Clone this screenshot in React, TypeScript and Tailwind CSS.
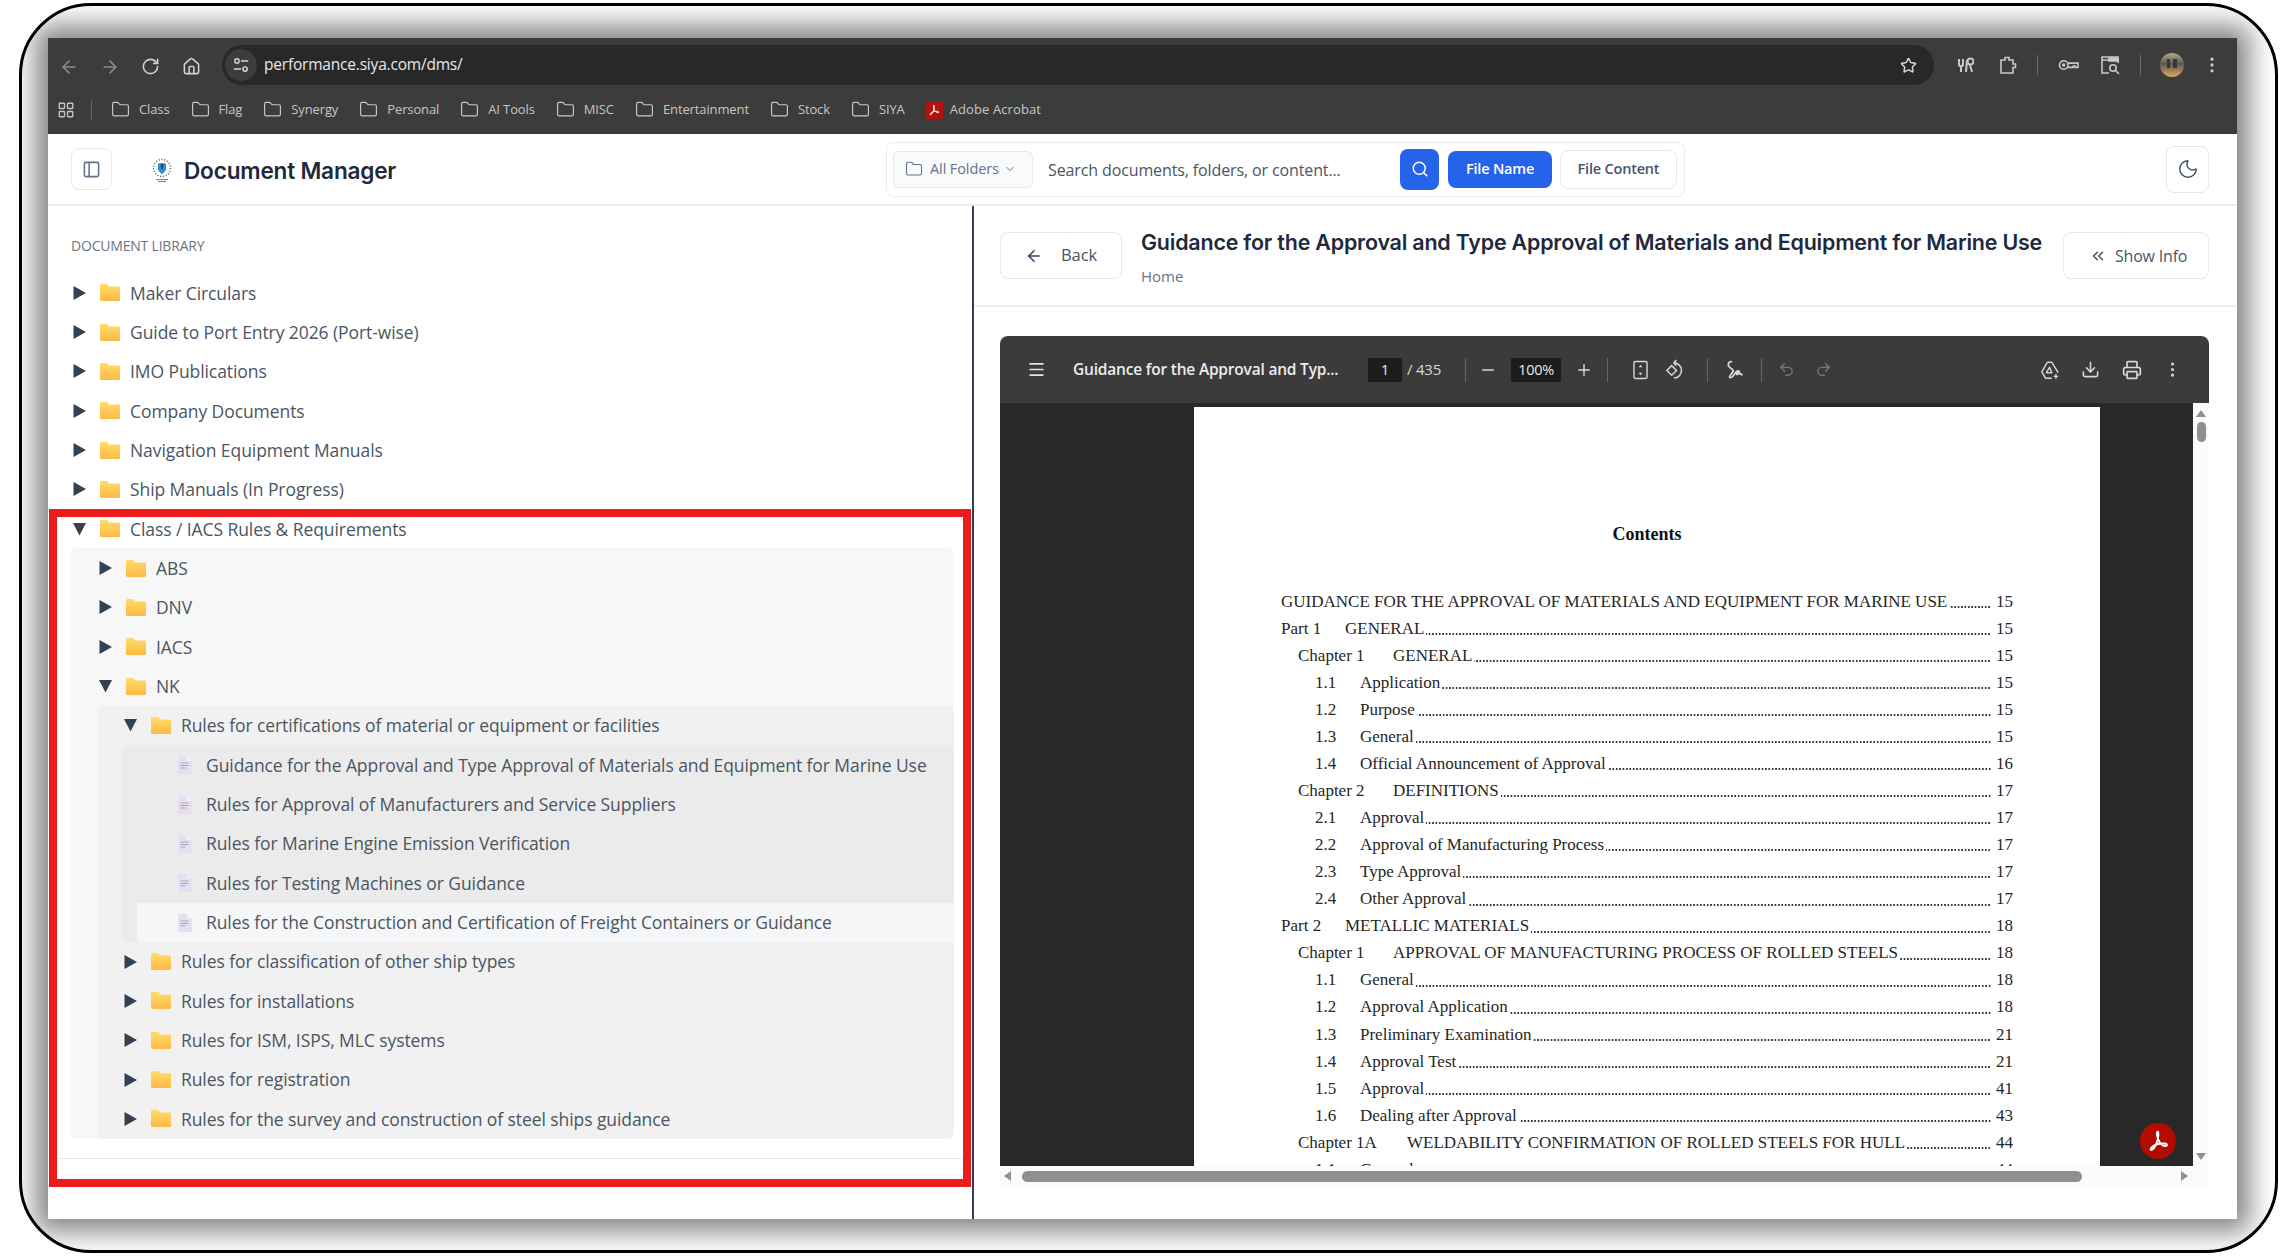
import {
  ArrowLeft,
  ArrowRight,
  ChevronDown,
  ChevronsLeft,
  Download,
  Folder,
  House,
  LayoutGrid,
  Menu,
  Minus,
  Moon,
  MoreVertical,
  PanelLeft,
  Plus,
  Printer,
  Redo2,
  RotateCw,
  Search,
  Star,
  Undo2,
} from "lucide-react";

const bookmarks = ["Class", "Flag", "Synergy", "Personal", "AI Tools", "MISC", "Entertainment", "Stock", "SIYA"];

const toc = [
  { kind: "top", label: "", text: "GUIDANCE FOR THE APPROVAL OF MATERIALS AND EQUIPMENT FOR MARINE USE", page: "15" },
  { kind: "part", label: "Part 1", text: "GENERAL", page: "15" },
  { kind: "chapter", label: "Chapter 1", text: "GENERAL", page: "15" },
  { kind: "section", label: "1.1", text: "Application", page: "15" },
  { kind: "section", label: "1.2", text: "Purpose", page: "15" },
  { kind: "section", label: "1.3", text: "General", page: "15" },
  { kind: "section", label: "1.4", text: "Official Announcement of Approval", page: "16" },
  { kind: "chapter", label: "Chapter 2", text: "DEFINITIONS", page: "17" },
  { kind: "section", label: "2.1", text: "Approval", page: "17" },
  { kind: "section", label: "2.2", text: "Approval of Manufacturing Process", page: "17" },
  { kind: "section", label: "2.3", text: "Type Approval", page: "17" },
  { kind: "section", label: "2.4", text: "Other Approval", page: "17" },
  { kind: "part", label: "Part 2", text: "METALLIC MATERIALS", page: "18" },
  { kind: "chapter", label: "Chapter 1", text: "APPROVAL OF MANUFACTURING PROCESS OF ROLLED STEELS", page: "18" },
  { kind: "section", label: "1.1", text: "General", page: "18" },
  { kind: "section", label: "1.2", text: "Approval Application", page: "18" },
  { kind: "section", label: "1.3", text: "Preliminary Examination", page: "21" },
  { kind: "section", label: "1.4", text: "Approval Test", page: "21" },
  { kind: "section", label: "1.5", text: "Approval", page: "41" },
  { kind: "section", label: "1.6", text: "Dealing after Approval", page: "43" },
  { kind: "wide", label: "Chapter 1A", text: "WELDABILITY CONFIRMATION OF ROLLED STEELS FOR HULL", page: "44" },
  { kind: "section", label: "1.1", text: "General", page: "44" },
];

const tocIndent: Record<string, string> = {
  top: "pl-0",
  part: "pl-0",
  chapter: "pl-[17px]",
  wide: "pl-[17px]",
  section: "pl-[34px]",
};

const tocLabel: Record<string, string> = {
  top: "w-0",
  part: "w-[64px]",
  chapter: "w-[95px]",
  wide: "w-[109px]",
  section: "w-[45px]",
};

function Caret({ open }: { open?: boolean }) {
  return (
    <svg viewBox="0 0 13 14" className="ml-[2px] h-[14px] w-[13px] shrink-0 fill-[#334155]">
      {open ? <path d="M0 1h13L6.5 13.5z" /> : <path d="M0.5 0 13 7 0.5 14z" />}
    </svg>
  );
}

function TreeFolder() {
  return (
    <svg viewBox="0 0 20 17" className="ml-[14px] h-[17px] w-[20px] shrink-0">
      <defs>
        <linearGradient id="fold" x1="0" y1="0" x2="0" y2="1">
          <stop offset="0" stopColor="#ffdc6a" />
          <stop offset="1" stopColor="#fdb945" />
        </linearGradient>
      </defs>
      <path d="M0 1.2C0 .5.5 0 1.2 0h5.6c.5 0 .9.2 1.1.6L9 2.4h9.8c.7 0 1.2.5 1.2 1.2v12.2c0 .7-.5 1.2-1.2 1.2H1.2C.5 17 0 16.500 0 15.800z" fill="url(#fold)" />
    </svg>
  );
}

function TreeFile() {
  return (
    <svg viewBox="0 0 14 19" className="h-[19px] w-[14px] shrink-0">
      <path d="M0 1h9l5 5v13H0z" fill="#e6dff3" />
      <path d="M9 1l5 5H9z" fill="#f3f0f8" />
      <path d="M2.500 8h8M2.500 10.500h8M2.500 13h5" stroke="#a9a7b4" strokeWidth="1.100" />
    </svg>
  );
}

function FolderRow({ name, open }: { name: string; open?: boolean }) {
  return (
    <div className="flex h-[39.35px] items-center">
      <Caret open={open} />
      <TreeFolder />
      <span className="ml-[10px] whitespace-nowrap text-[17.500px] tracking-[-0.08px] text-[#4b5563]">{name}</span>
    </div>
  );
}

function FileRow({ name, active }: { name: string; active?: boolean }) {
  return (
    <div className={`ml-[15px] flex h-[39.35px] items-center pl-[41px] ${active ? "bg-[#f5f6f7]" : ""}`}>
      <TreeFile />
      <span className="ml-[14px] whitespace-nowrap text-[17.500px] tracking-[-0.08px] text-[#4b5563]">{name}</span>
    </div>
  );
}

function Tree() {
  return (
    <div>
      <FolderRow name="Maker Circulars" />
      <FolderRow name="Guide to Port Entry 2026 (Port-wise)" />
      <FolderRow name="IMO Publications" />
      <FolderRow name="Company Documents" />
      <FolderRow name="Navigation Equipment Manuals" />
      <FolderRow name="Ship Manuals (In Progress)" />
      <FolderRow name="Class / IACS Rules & Requirements" open />
      <div className="rounded-md bg-[#f7f7f7] pl-[26px]">
        <FolderRow name="ABS" />
        <FolderRow name="DNV" />
        <FolderRow name="IACS" />
        <FolderRow name="NK" open />
        <div className="rounded-md bg-[#f1f1f1] pl-[25px]">
          <FolderRow name="Rules for certifications of material or equipment or facilities" open />
          <div className="rounded-md bg-[#ebebeb]">
            <FileRow name="Guidance for the Approval and Type Approval of Materials and Equipment for Marine Use" />
            <FileRow name="Rules for Approval of Manufacturers and Service Suppliers" />
            <FileRow name="Rules for Marine Engine Emission Verification" />
            <FileRow name="Rules for Testing Machines or Guidance" />
            <FileRow name="Rules for the Construction and Certification of Freight Containers or Guidance" active />
          </div>
          <FolderRow name="Rules for classification of other ship types" />
          <FolderRow name="Rules for installations" />
          <FolderRow name="Rules for ISM, ISPS, MLC systems" />
          <FolderRow name="Rules for registration" />
          <FolderRow name="Rules for the survey and construction of steel ships guidance" />
        </div>
      </div>
    </div>
  );
}

function AcrobatMark({ className }: { className: string }) {
  return (
    <svg viewBox="0 0 24 24" fill="none" stroke="currentColor" strokeWidth="1.700" strokeLinejoin="round" className={className}>
      <path d="M11.800 3.500c-1.300 0-1.100 3.300.5 7.200 1.500 3.600 4.100 6 6.500 5.900 2.300-.1 1.900-2.200-.5-2.300-4.200-.2-8.600.7-11.300 2.700-2.300 1.700-2.200 3.600-.9 3.200 1.600-.5 4-4.300 5.200-8.100.9-2.900 1.700-8.600.5-8.600z" />
    </svg>
  );
}

function Logo() {
  return (
    <svg viewBox="0 0 20 26" className="h-[26px] w-[20px] shrink-0">
      <circle cx="10" cy="12" r="8.500" fill="none" stroke="#55708f" strokeWidth="1.400" strokeDasharray="1.200 1.600" />
      <path d="M6 7.500h8v6.500l-4 4.500-4-4.500z" fill="#2e8fc9" />
      <path d="M8.500 7.500h3l-1 6h-1z" fill="#0f4e80" />
      <path d="M4 23.500h12M6 25.500h8" stroke="#6d7ea8" strokeWidth="1.200" />
    </svg>
  );
}

function ChromeBar() {
  return (
    <div className="h-[96px] shrink-0 bg-[#3c3c3c]">
      <div className="flex h-[54px] items-end">
        <div className="flex h-[49px] w-[174px] shrink-0 items-center pb-[2px] pl-[11px]">
          <ArrowLeft className="h-[20px] w-[20px] text-[#8a8a8a]" />
          <ArrowRight className="ml-[21px] h-[20px] w-[20px] text-[#8a8a8a]" />
          <RotateCw className="ml-[21px] h-[19px] w-[19px] text-[#d0d0d0]" />
          <House className="ml-[22px] h-[19px] w-[19px] text-[#d0d0d0]" />
        </div>
        <div className="mb-[7px] flex h-[40px] w-[1712px] shrink-0 items-center rounded-full bg-[#282828] pl-[3px] pr-[17px]">
          <div className="flex h-[32px] w-[32px] items-center justify-center rounded-full bg-[#3c3c3c]">
            <svg viewBox="0 0 20 20" fill="none" stroke="#d8d8d8" strokeWidth="1.600" className="h-[18px] w-[18px]">
              <circle cx="5.500" cy="5.500" r="2.400" />
              <path d="M10 5.500h8M2 14.500h8" />
              <circle cx="14.500" cy="14.500" r="2.400" />
            </svg>
          </div>
          <span className="ml-[7px] text-[15.500px] tracking-[-0.2px] text-[#e8e8e8]">performance.siya.com/dms/</span>
          <Star className="ml-auto h-[17px] w-[17px] text-[#dcdcdc]" strokeWidth={2} />
        </div>
        <div className="mb-[7px] flex h-[40px] flex-1 items-center text-[#c8c8c8]">
          <svg viewBox="0 0 18 18" className="ml-[22px] h-[18px] w-[18px]" fill="none" stroke="currentColor" strokeWidth="2">
            <path d="M3 3v6l2 2v5M7 3v6l-2 2M11 4l-1 12M14.500 2.500a3 3 0 1 1 0 6 3 3 0 0 1 0-6zM14 9l2 7" />
          </svg>
          <svg viewBox="0 0 20 20" className="ml-[24px] h-[20px] w-[20px]" fill="none" stroke="currentColor" strokeWidth="1.600">
            <path d="M3 5h4V2.500h4V5h4v4h2.500v3.500H15V18H3z" />
          </svg>
          <div className="ml-[19px] h-[20px] w-px bg-[#6a6a6a]" />
          <svg viewBox="0 0 22 14" className="ml-[20px] h-[14px] w-[21px]" fill="none" stroke="currentColor" strokeWidth="1.700">
            <circle cx="6" cy="7" r="4.500" />
            <circle cx="6" cy="7" r="1" />
            <path d="M10.500 5H21v4.500h-3V8h-2v1.500h-5.500" />
          </svg>
          <svg viewBox="0 0 20 20" className="ml-[21px] h-[20px] w-[20px]" fill="none" stroke="currentColor" strokeWidth="1.600">
            <path d="M9 18H2V2h16v6M2 5h16" />
            <path d="M9 3h9v3H9z" fill="currentColor" />
            <circle cx="13" cy="13" r="3.200" />
            <path d="M15.500 15.500 19 19" />
          </svg>
          <div className="ml-[20px] h-[20px] w-px bg-[#6a6a6a]" />
          <svg viewBox="0 0 24 24" className="ml-[19px] h-[24px] w-[24px]">
            <defs>
              <linearGradient id="avatar" x1="0" y1="0" x2="0" y2="1">
                <stop offset="0" stopColor="#b9a98a" />
                <stop offset="0.450" stopColor="#5c5a55" />
                <stop offset="1" stopColor="#e0a45c" />
              </linearGradient>
            </defs>
            <circle cx="12" cy="12" r="12" fill="url(#avatar)" />
            <path d="M7 6h3v9H7zM13 6h4v9h-4z" fill="#33373d" />
          </svg>
          <MoreVertical className="ml-[18px] h-[20px] w-[20px]" />
        </div>
      </div>
      <div className="flex h-[35px] items-center pl-[9px] text-[13px] tracking-[-0.12px] text-[#c6c6c6]">
        <LayoutGrid className="h-[18px] w-[18px]" strokeWidth={1.800} />
        <div className="ml-[16px] h-[20px] w-px bg-[#666666]" />
        <div className="ml-[19px] flex items-center gap-[21px]">
          {bookmarks.map((name) => (
            <div key={name} className="flex items-center gap-[9px]">
              <Folder className="h-[19px] w-[19px]" strokeWidth={1.500} />
              <span>{name}</span>
            </div>
          ))}
          <div className="flex items-center gap-[7px]">
            <div className="flex h-[18px] w-[17px] items-center justify-center rounded-[2px] bg-[#b3120f] text-white">
              <AcrobatMark className="h-[14px] w-[14px]" />
            </div>
            <span className="tracking-[0.1px]">Adobe Acrobat</span>
          </div>
        </div>
      </div>
    </div>
  );
}

function AppHeader() {
  return (
    <div className="flex h-[72px] shrink-0 items-center border-b-2 border-[#eceef1]">
      <div className="ml-[23px] flex h-[42px] w-[41px] shrink-0 items-center justify-center rounded-lg border border-[#e5e7eb]">
        <PanelLeft className="h-[19px] w-[19px] text-[#64748b]" />
      </div>
      <div className="ml-[40px] flex w-[734px] shrink-0 items-center">
        <Logo />
        <span className="ml-[12px] pt-[3px] font-['Inter',sans-serif] text-[22.600px] font-semibold tracking-[-0.2px] text-[#1e293b]">Document Manager</span>
      </div>
      <div className="flex h-[55px] w-[799px] shrink-0 items-center rounded-lg border border-[#e9ebee] pl-[6px]">
        <div className="flex h-[37px] w-[140px] items-center rounded-md border border-[#e5e7eb] bg-[#f9fafb] pl-[11px] text-[14.500px] tracking-[-0.1px] text-[#64748b]">
          <Folder className="h-[18px] w-[18px]" strokeWidth={1.500} />
          <span className="ml-[7px]">All Folders</span>
          <ChevronDown className="ml-[5px] h-[12px] w-[12px]" />
        </div>
        <span className="ml-[15px] w-[352px] pt-[2px] text-[16px] tracking-[-0.12px] text-[#4b5563]">Search documents, folders, or content...</span>
        <div className="flex h-[41px] w-[39px] items-center justify-center rounded-lg bg-[#2563eb]">
          <Search className="h-[18px] w-[18px] text-white" />
        </div>
        <div className="ml-[9px] flex h-[37px] w-[104px] items-center justify-center rounded-lg bg-[#2563eb] text-[14.500px] font-semibold tracking-[-0.2px] text-white">File Name</div>
        <div className="ml-[8px] flex h-[39px] w-[117px] items-center justify-center rounded-lg border border-[#e5e7eb] text-[14.500px] font-semibold tracking-[-0.2px] text-[#475569]">File Content</div>
      </div>
      <div className="ml-auto mr-[28px] flex h-[47px] w-[43px] items-center justify-center rounded-lg border border-[#e5e7eb]">
        <Moon className="h-[22px] w-[22px] text-[#475569]" strokeWidth={1.600} />
      </div>
    </div>
  );
}

function PdfToolbar() {
  return (
    <div className="flex h-[67px] shrink-0 items-center bg-[#3b3b3b] text-[#d6d6d6]">
      <Menu className="ml-[27px] h-[19px] w-[19px] text-[#e4e4e4]" strokeWidth={2.200} />
      <span className="ml-[27px] w-[295px] whitespace-nowrap text-[15.500px] font-semibold tracking-[-0.2px] text-[#ececec]">Guidance for the Approval and Typ...</span>
      <div className="flex h-[24px] w-[34px] items-center justify-center bg-[#1c1c1c] text-[15px] text-[#e8e8e8]">1</div>
      <span className="ml-[5px] text-[15px] tracking-[-0.2px]">/ 435</span>
      <div className="ml-[24px] h-[24px] w-px bg-[#666666]" />
      <Minus className="ml-[13px] h-[18px] w-[18px]" />
      <div className="ml-[14px] flex h-[24px] w-[50px] items-center justify-center bg-[#1c1c1c] text-[14.500px] tracking-[-0.3px] text-[#e8e8e8]">100%</div>
      <Plus className="ml-[14px] h-[18px] w-[18px]" />
      <div className="ml-[14px] h-[24px] w-px bg-[#666666]" />
      <svg viewBox="0 0 16 20" className="ml-[25px] h-[20px] w-[15px]" fill="none" stroke="currentColor" strokeWidth="1.500">
        <rect x="1" y="1" width="14" height="18" rx="1.500" />
        <path d="M8 4.500l-2 2.500h4zM8 15.500l-2-2.500h4z" fill="currentColor" stroke="none" />
      </svg>
      <svg viewBox="0 0 22 22" className="ml-[17px] h-[21px] w-[21px]" fill="none" stroke="currentColor" strokeWidth="1.600">
        <path d="M2 12l5-5 5 5-5 5z" />
        <path d="M9 4a8 8 0 1 1 .5 16M9 4l3-3M9 4l3 3" />
      </svg>
      <div className="ml-[21px] h-[24px] w-px bg-[#666666]" />
      <svg viewBox="0 0 20 20" className="ml-[16px] h-[21px] w-[21px]" fill="none" stroke="currentColor" strokeWidth="1.700" strokeLinecap="round">
        <path d="M7 2.500C4 2.500 3 6 5.500 8c2.500 2 4.500 2.500 2.500 5-1.500 2-3.500 3.500-2.500 4.500 1.500 1 4-2 5.500-4.500 1-1.700 3.500-2.500 3.500-.5 0 2.500-3 3-2.500 1 .3-1 3-.5 5 1.500" />
      </svg>
      <div className="ml-[16px] h-[24px] w-px bg-[#666666]" />
      <Undo2 className="ml-[16px] h-[17px] w-[17px] text-[#777777]" />
      <Redo2 className="ml-[20px] h-[17px] w-[17px] text-[#777777]" />
      <svg viewBox="0 0 22 22" className="ml-[208px] h-[20px] w-[20px]" fill="none" stroke="currentColor" strokeWidth="1.600" strokeLinejoin="round">
        <path d="M8 2.500h5L20 14M8 2.500 2 13l4 7h7M13 2.500" />
        <path d="M10.500 8 7 14h6z" />
        <path d="M17.500 15.500v5M15 18h5" />
      </svg>
      <Download className="ml-[21px] h-[19px] w-[19px]" />
      <Printer className="ml-[22px] h-[20px] w-[20px]" />
      <MoreVertical className="ml-[21px] h-[19px] w-[19px]" />
    </div>
  );
}

function PdfPage() {
  return (
    <div className="h-[759px] w-[906px] shrink-0 overflow-hidden bg-white pl-[87px] pr-[87px] pt-[116px] font-['Liberation_Serif',serif] text-[#262626]">
      <div className="h-[22px] text-center text-[18px] font-bold leading-[22px] text-[#111111]">Contents</div>
      <div className="mt-[43px]">
        {toc.map((row, i) => (
          <div key={i} className={`flex h-[27.05px] items-center whitespace-nowrap text-[17px] ${tocIndent[row.kind]}`}>
            {row.label ? <span className={`shrink-0 ${tocLabel[row.kind]}`}>{row.label}</span> : null}
            <span className="shrink-0">{row.text}</span>
            <div className="ml-[2px] mt-[11px] h-[4px] min-w-0 flex-1 bg-[radial-gradient(circle,#3a3a3a_0.8px,transparent_1.1px)] bg-[length:3.4px_4px] bg-right bg-repeat-x" />
            <span className="ml-[5px] shrink-0">{row.page}</span>
          </div>
        ))}
      </div>
    </div>
  );
}

function PdfViewer() {
  return (
    <div className="ml-[26px] mt-[29px] w-[1209px] overflow-hidden rounded-t-lg">
      <PdfToolbar />
      <div className="relative flex h-[763px]">
        <div className="flex flex-1 bg-[#282828] pl-[194px] pt-[4px]">
          <PdfPage />
        </div>
        <div className="flex w-[16px] shrink-0 flex-col items-center bg-[#fbfbfb] pt-[7px]">
          <div className="h-0 w-0 border-x-[5px] border-b-[7px] border-x-transparent border-b-[#8f8f8f]" />
          <div className="mt-[5px] h-[20px] w-[9px] rounded-full bg-[#8f8f8f]" />
          <div className="mt-auto mb-[6px] h-0 w-0 border-x-[5px] border-t-[7px] border-x-transparent border-t-[#8f8f8f]" />
        </div>
        <div className="absolute right-[33px] bottom-[7px] flex h-[36px] w-[36px] items-center justify-center rounded-full bg-[#b30b00] text-white">
          <AcrobatMark className="h-[26px] w-[26px]" />
        </div>
      </div>
      <div className="flex h-[20px] items-center bg-[#fbfbfb] pl-[4px]">
        <div className="h-0 w-0 border-y-[5px] border-r-[7px] border-y-transparent border-r-[#8f8f8f]" />
        <div className="ml-[11px] h-[11px] w-[1060px] rounded-full bg-[#8f8f8f]" />
        <div className="ml-[99px] h-0 w-0 border-y-[5px] border-l-[7px] border-y-transparent border-l-[#8f8f8f]" />
      </div>
    </div>
  );
}

function DocPanel() {
  return (
    <div className="min-w-0 flex-1">
      <div className="flex h-[101px] border-b-2 border-[#eceef1] pl-[26px] pt-[26px]">
        <div className="flex h-[47px] w-[122px] shrink-0 items-center rounded-lg border border-[#e5e7eb] pl-[24px] text-[16.500px] tracking-[-0.1px] text-[#475569]">
          <ArrowLeft className="h-[18px] w-[18px] text-[#334155]" />
          <span className="ml-[18px]">Back</span>
        </div>
        <div className="ml-[19px] w-[922px] shrink-0">
          <div className="-mt-[5px] whitespace-nowrap font-['Inter',sans-serif] text-[21.450px] font-semibold leading-[30px] tracking-[-0.2px] text-[#1e293b]">
            Guidance for the Approval and Type Approval of Materials and Equipment for Marine Use
          </div>
          <div className="mt-[8px] text-[15px] text-[#64748b]">Home</div>
        </div>
        <div className="flex h-[47px] w-[146px] shrink-0 items-center rounded-lg border border-[#e5e7eb] pl-[25px] text-[16px] tracking-[-0.2px] text-[#475569]">
          <ChevronsLeft className="h-[18px] w-[18px]" />
          <span className="ml-[8px]">Show Info</span>
        </div>
      </div>
      <PdfViewer />
    </div>
  );
}

export default function App() {
  return (
    <div className="h-[1260px] w-[2287px] overflow-hidden bg-white pl-[19px] pt-[3px] font-['Open_Sans',sans-serif]">
      <div className="h-[1250px] w-[2259px] overflow-hidden rounded-[72px] border-[3px] border-black bg-white pl-[26px] pt-[32px]">
        <div className="flex h-[1181px] w-[2189px] flex-col bg-white shadow-[0_0_26px_12px_rgba(0,0,0,0.5)]">
          <ChromeBar />
          <AppHeader />
          <div className="flex min-h-0 flex-1">
            <div className="relative w-[926px] shrink-0 border-r-2 border-[#334155] pl-[23px] pr-[18px] pt-[30px]">
              <div className="h-[20px] text-[14px] leading-[20px] tracking-[-0.2px] text-[#6b7280]">DOCUMENT LIBRARY</div>
              <div className="mt-[17px]">
                <Tree />
              </div>
              <div className="-ml-[13px] -mr-[18px] mt-[19px] border-t border-[#e5e7eb]" />
              <div className="absolute left-px top-[303px] h-[678px] w-[922px] border-[8px] border-[#ec1c1c]" />
            </div>
            <DocPanel />
          </div>
        </div>
      </div>
    </div>
  );
}
